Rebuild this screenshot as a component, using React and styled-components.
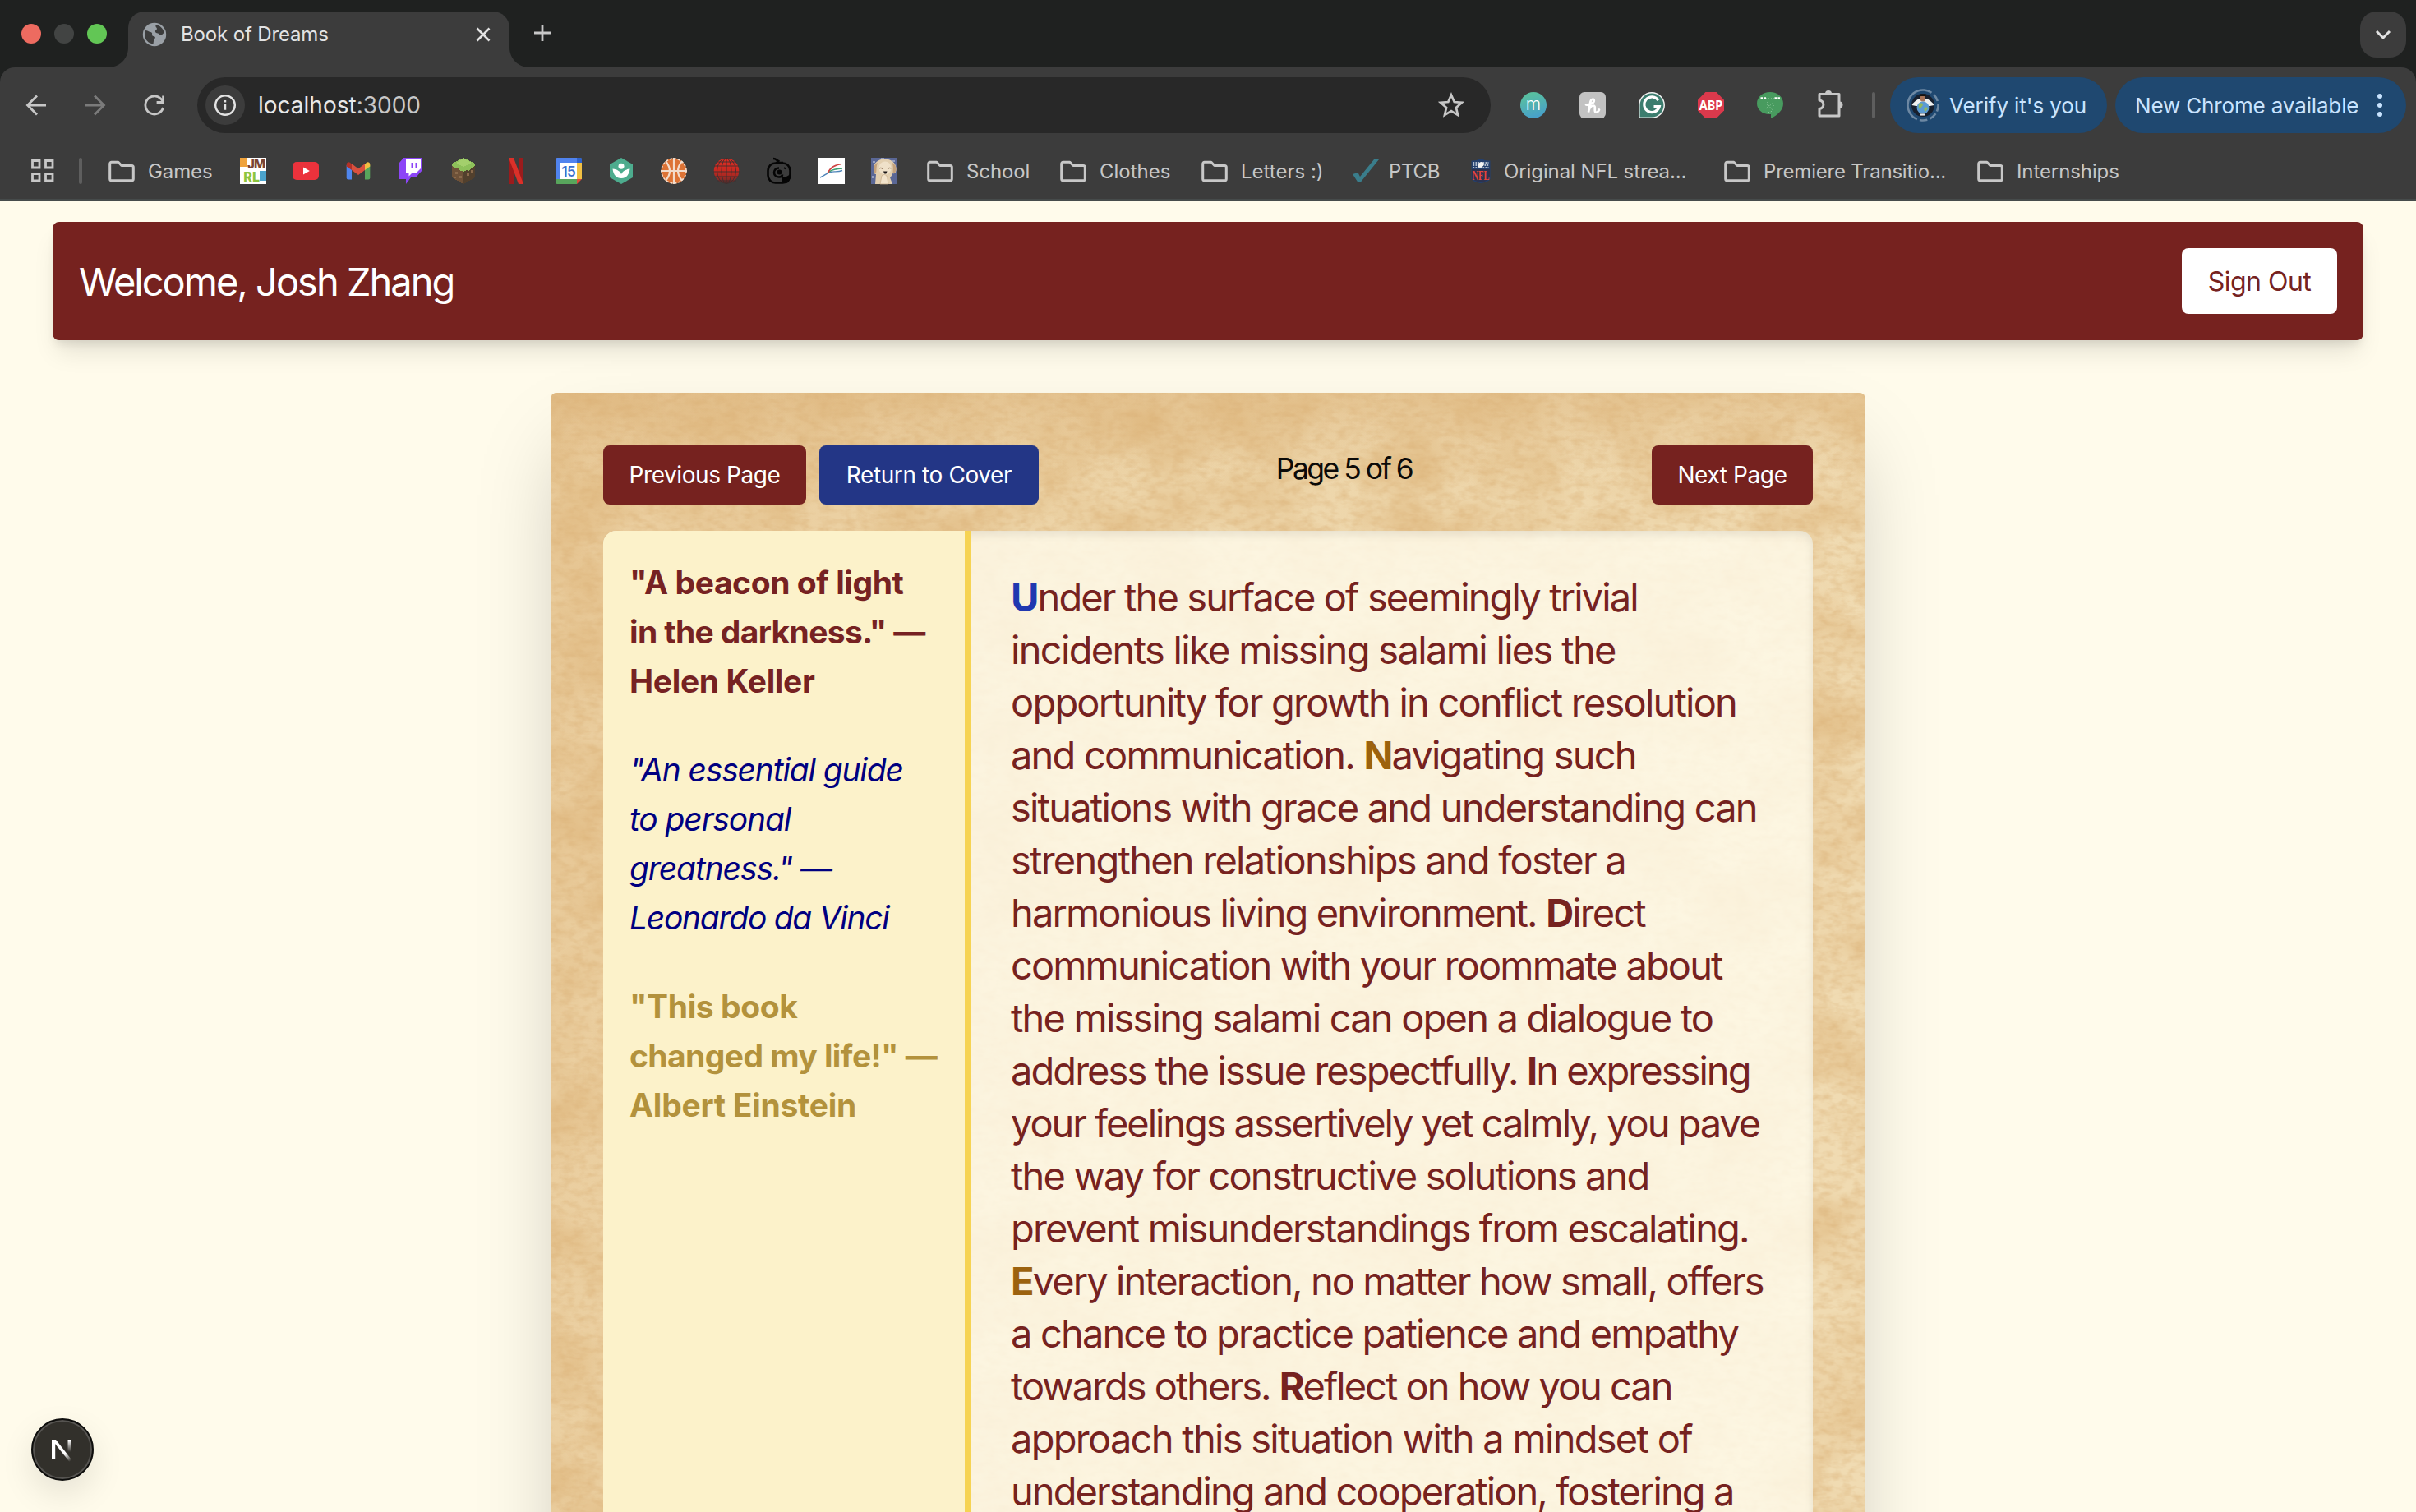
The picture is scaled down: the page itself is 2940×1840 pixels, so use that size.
import React from "react";
import styled, { createGlobalStyle } from "styled-components";

const GlobalStyle = createGlobalStyle`
  *, *::before, *::after { box-sizing: border-box; }
  html, body { margin: 0; padding: 0; overflow: hidden; }
  body { background: #fffbeb; font-family: Inter, "Liberation Sans", sans-serif; -webkit-font-smoothing: antialiased; }
  svg { display: block; flex: none; overflow: visible; }
  p { margin: 0; }
`;

/* ---------- window ---------- */
const Window = styled.div`
  width: 2940px;
  height: 1840px;
  display: flex;
  flex-direction: column;
  overflow: hidden;
  position: relative;
`;

const Text = styled.span`
  display: block;
  flex: none;
  white-space: nowrap;
  width: ${(p) => (p.$w ? `${p.$w}px` : "auto")};
  margin-left: ${(p) => p.$ml || 0}px;
  font-size: ${(p) => p.$size || 24}px;
  font-weight: ${(p) => p.$weight || 400};
  letter-spacing: ${(p) => p.$ls || 0}px;
  color: ${(p) => p.$color || "inherit"};
`;

/* ---------- tab strip ---------- */
const TabStrip = styled.div`
  height: 82px;
  flex: none;
  background: #1f2120;
  display: flex;
  align-items: flex-start;
  padding: 14px 12px 0 26px;
`;
const Lights = styled.div`
  display: flex;
  gap: 16px;
  padding-top: 15px;
  width: 130px;
`;
const Light = styled.i`
  width: 24px;
  height: 24px;
  border-radius: 50%;
  background: ${(p) => p.$color};
`;
const Tab = styled.div`
  width: 464px;
  height: 68px;
  border-radius: 20px 20px 0 0;
  background: #3c3c3c;
  color: #e3e3e3;
  display: flex;
  align-items: center;
  padding: 0 23px 13px 17px;
  position: relative;
  &::before, &::after {
    content: "";
    position: absolute;
    bottom: 0;
    width: 24px;
    height: 24px;
  }
  &::before {
    left: -24px;
    background: radial-gradient(circle at 0 0, transparent 23.5px, #3c3c3c 24.5px);
  }
  &::after {
    right: -24px;
    background: radial-gradient(circle at 100% 0, transparent 23.5px, #3c3c3c 24.5px);
  }
`;
const TabTitle = styled(Text)`
  margin-left: 17px;
  flex: 1;
`;
const NewTab = styled.div`
  margin-left: 29px;
  padding-top: 15px;
`;
const TabSearch = styled.div`
  margin-left: auto;
  width: 56px;
  height: 56px;
  border-radius: 20px;
  background: #3c3c3c;
  display: grid;
  place-items: center;
`;

/* ---------- toolbar ---------- */
const ToolbarBack = styled.div`
  background: #1f2120;
  flex: none;
`;
const Chrome = styled.div`
  height: 162px;
  background: #3c3c3c;
  border-radius: 18px 18px 0 0;
  border-bottom: 2px solid #464b4b;
  display: flex;
  flex-direction: column;
`;
const Toolbar = styled.div`
  height: 92px;
  padding: 12px 12px 12px 28px;
  display: flex;
  align-items: center;
`;
const NavIcons = styled.div`
  width: 212px;
  display: flex;
  gap: 40px;
`;
const AddressBar = styled.div`
  width: 1574px;
  height: 68px;
  border-radius: 34px;
  background: #282828;
  display: flex;
  align-items: center;
  padding: 0 31px 0 10px;
`;
const InfoChip = styled.div`
  width: 48px;
  height: 48px;
  border-radius: 50%;
  background: #3c3c3c;
  display: grid;
  place-items: center;
  margin-right: 16px;
`;
const Port = styled.span`
  color: #c7c7c7;
`;
const Url = styled(Text)`
  flex: 1;
  color: #e8e8e8;
`;
const Extensions = styled.div`
  display: flex;
  gap: 40px;
  margin-left: 36px;
`;
const Divider = styled.i`
  width: 4px;
  height: 32px;
  margin-left: ${(p) => p.$ml}px;
  border-radius: 2px;
  background: #5e5e5e;
  flex: none;
`;
const Pill = styled.div`
  height: 68px;
  width: ${(p) => p.$w}px;
  border-radius: 34px;
  background: #1f4870;
  color: #c9e4ff;
  display: flex;
  align-items: center;
  margin-left: ${(p) => p.$gap}px;
  padding: 0 20px;
`;

/* ---------- bookmarks ---------- */
const Bookmarks = styled.div`
  height: 68px;
  padding: 0 0 0 36px;
  display: flex;
  align-items: center;
  color: #c7c7c7;
`;
const Bookmark = styled.div`
  display: flex;
  align-items: center;
  gap: ${(p) => p.$gap || 16}px;
  margin-left: ${(p) => p.$ml || 0}px;
`;
const Favicons = styled.div`
  display: flex;
  gap: 32px;
  margin-left: 32px;
`;

/* ---------- page ---------- */
const Page = styled.main`
  flex: 1;
  min-height: 0;
  padding: 26px 64px 0;
  display: flex;
  flex-direction: column;
  align-items: center;
`;
const Banner = styled.header`
  width: 100%;
  height: 144px;
  flex: none;
  padding: 32px;
  border-radius: 8px;
  background: #76221f;
  color: #fff;
  display: flex;
  align-items: center;
  justify-content: space-between;
  box-shadow: 0 20px 30px -6px rgba(0, 0, 0, 0.1), 0 8px 12px -4px rgba(0, 0, 0, 0.1);
`;
const Button = styled.button`
  appearance: none;
  border: 0;
  font-family: inherit;
  width: ${(p) => p.$w}px;
  height: ${(p) => p.$h || 72}px;
  border-radius: 8px;
  background: ${(p) => p.$bg || "#76221f"};
  color: ${(p) => p.$fg || "#fff"};
  padding: 0;
  display: flex;
  align-items: center;
  justify-content: center;
`;
const Book = styled.article`
  width: 1600px;
  height: 1600px;
  flex: none;
  margin-top: 64px;
  padding: 64px;
  border-radius: 8px;
  position: relative;
  isolation: isolate;
  background: #e8cb9b;
  box-shadow: 0 50px 100px -24px rgba(0, 0, 0, 0.25);
`;
const Parchment = styled.svg`
  position: absolute;
  inset: 0;
  width: 100%;
  height: 100%;
  border-radius: 8px;
  overflow: hidden;
  z-index: -1;
`;
const BookNav = styled.nav`
  display: flex;
  justify-content: space-between;
  align-items: flex-start;
  height: 72px;
  margin-bottom: 32px;
`;
const ButtonGroup = styled.div`
  display: flex;
  gap: 16px;
`;
const PageCount = styled(Text)`
  line-height: 57px;
  padding-right: 3px;
  color: #0c0a08;
`;
const Spread = styled.div`
  height: 1400px;
  display: flex;
  border-radius: 16px;
  overflow: hidden;
  background: rgba(255, 251, 236, 0.82);
  box-shadow: inset 0 4px 12px rgba(0, 0, 0, 0.09);
`;
const Sidebar = styled.aside`
  width: 448px;
  flex: none;
  padding: 33px 0 0 32px;
  background: #fcf2ca;
  border-right: 8px solid #f6d353;
  display: flex;
  flex-direction: column;
  gap: 48px;
`;
const Quote = styled.p`
  font-size: 39px;
  line-height: 60px;
  font-weight: ${(p) => p.$weight};
  font-style: ${(p) => (p.$italic ? "italic" : "normal")};
  color: ${(p) => p.$color};
`;
const Passage = styled.p`
  padding: 49px 0 0 48px;
  font-size: 47px;
  line-height: 64px;
  font-weight: 425;
  color: #76221f;
`;
const Line = styled.span`
  display: block;
  white-space: nowrap;
  letter-spacing: ${(p) => p.$ls || 0}px;
`;
const Initial = styled.b`
  font-weight: 700;
  color: ${(p) => p.$color || "inherit"};
`;
const DevBadge = styled.div`
  position: absolute;
  left: 38px;
  top: 1726px;
  width: 76px;
  height: 76px;
  border-radius: 50%;
  background: #32302b;
  border: 2px solid #0e0e0d;
  box-shadow: inset 0 0 0 2px #565451, 0 16px 40px rgba(0, 0, 0, 0.1);
  display: grid;
  place-items: center;
`;

/* ---------- icons ---------- */
const Stroke = ({ size = 32, w = 2.8, color = "#c7c7c7", children, ...rest }) => (
  <svg width={size} height={size} viewBox="0 0 32 32" fill="none" stroke={color} strokeWidth={w} {...rest}>
    {children}
  </svg>
);
const Globe = () => (
  <svg width="30" height="30" viewBox="0 0 30 30">
    <circle cx="15" cy="15" r="14.2" fill="#9aa0a6" />
    <path d="M3 15c0-2 .4-3.500 1.200-5 2 .2 3.800 1.500 5.500 1.700 2 .3 2.800 1.600 2.300 3.300-.3 1.300 1 2.200 2.600 2.300 1.800.2 1.600 2.300.4 3.200-1 .9-1 2.300-1.500 6C7.500 26 3 21 3 15z" fill="#3c3c3c" />
    <path d="M16.500 3.200c5 .5 9 4.400 10.200 9.300-1.500 2-2.700 3.200-4.500 3.200-1.600 0-1.500-1.900-3-2.200-2-.3-3.500-.8-3.300-2.700.2-1.400 2-1.300 2.100-2.800 0-1.700-2.200-1.700-1.500-4.800z" fill="#3c3c3c" />
  </svg>
);
const Folder = () => (
  <Stroke w="3">
    <path d="M1.700 7.200a2 2 0 0 1 2-2h8.200l4 4.300h12.400a2 2 0 0 1 2 2v14.300a2 2 0 0 1-2 2H3.700a2 2 0 0 1-2-2z" strokeLinejoin="round" />
  </Stroke>
);
const Fav = ({ children, ...rest }) => (
  <svg width="32" height="32" viewBox="0 0 32 32" {...rest}>
    {children}
  </svg>
);
const fontFam = 'Inter, "Liberation Sans", sans-serif';
const T = ({ s, w = 400, c = "#fff", children, f, ...rest }) => (
  <text fontFamily={f || fontFam} fontSize={s} fontWeight={w} fill={c} textAnchor="middle" {...rest}>
    {children}
  </text>
);

const BookmarkIcons = () => (
  <Favicons>
    <Fav>
      <rect width="32" height="32" fill="#fff" />
      <rect width="8" height="11" fill="#f0a33c" />
      <rect x="24" y="16" width="8" height="12" fill="#4ba3cc" />
      <T s="15" w="800" c="#7a4430" x="13.500" y="13">J</T>
      <T s="15" w="800" c="#7a4430" x="24" y="13">M</T>
      <T s="16" w="800" c="#8cc540" x="9.500" y="29">R</T>
      <T s="16" w="800" c="#8cc540" x="19.500" y="29">L</T>
    </Fav>
    <Fav>
      <rect y="5" width="32" height="22" rx="5" fill="#eb323c" />
      <path d="M13 11.500v9l7.800-4.500z" fill="#fff" />
    </Fav>
    <Fav>
      <path d="M1.700 9v15.500a2 2 0 0 0 2 2H8V14z" fill="#4f86ee" />
      <path d="M30.300 9v15.500a2 2 0 0 1-2 2H24V14z" fill="#58a55c" />
      <path d="M24 8v7l6.300-4.500V8c0-2.500-2.500-3.600-4.300-2.300z" fill="#f1bf42" />
      <path d="M8 8v7l-6.300-4.500V8c0-2.500 2.500-3.600 4.300-2.300z" fill="#b33127" />
      <path d="M8 7.200l8 6 8-6V15l-8 6-8-6z" fill="#d9503f" />
    </Fav>
    <Fav>
      <path d="M7 0h23v15l-8 9h-6l-6 8v-6H2V6z" fill="#8c45f7" />
      <path d="M10 2h18v11l-6 6h-5l-3.500 3.500V19H10z" fill="#fff" />
      <path d="M16.500 6h2.500v7h-2.500zM21.500 6H24v7h-2.500z" fill="#8c45f7" />
    </Fav>
    <Fav shapeRendering="crispEdges">
      <path d="M2 7l14 7v18L2 24z" fill="#6e5138" />
      <path d="M30 7L16 14v18l14-8z" fill="#52402d" />
      <path d="M16 0L30 7v3l-4 2-3 4-3-1-4 2-5-2-2-2-4 0-3-4V7z" fill="#8dc05a" />
      <path d="M16 1l10 5-10 5L7 6z" fill="#a3cf6c" />
      <path d="M6 17h3v3H6zM11 22h3v3h-3zM20 19h3v3h-3zM25 15h3v3h-3zM5 23h2v2H5z" fill="#8a6a4c" />
    </Fav>
    <Fav>
      <path d="M7 0h6v32H7zM19 0h6v32h-6z" fill="#9b1b1c" />
      <path d="M7 0h6l12 32h-6z" fill="#db3029" />
    </Fav>
    <Fav>
      <path d="M2 0h28a2 2 0 0 1 2 2v5H0V2a2 2 0 0 1 2-2z" fill="#5083ee" />
      <path d="M0 6h7v20H0z" fill="#5083ee" />
      <path d="M26 0h4a2 2 0 0 1 2 2v4h-6z" fill="#2f62c9" />
      <path d="M26 6h6v20h-6z" fill="#f2c143" />
      <path d="M0 26h26v6H2a2 2 0 0 1-2-2z" fill="#58a55c" />
      <path d="M26 26h6l-6 6z" fill="#e0483c" />
      <rect x="6" y="6" width="20" height="20" fill="#fff" />
      <T s="17" w="600" c="#3b6fce" x="15.800" y="22.500" letterSpacing="-0.6">15</T>
    </Fav>
    <Fav>
      <path d="M16 0l14 8v16l-14 8-14-8V8z" fill="#4dac8e" />
      <circle cx="16" cy="10.300" r="3.500" fill="#fff" />
      <path d="M16 25c-6 0-9.500-4-10.500-11.500C11 14 14.500 16.500 16 20c1.500-3.500 5-6 10.500-6.500C25.500 21 22 25 16 25z" fill="#fff" />
    </Fav>
    <Fav>
      <circle cx="16" cy="16" r="15.500" fill="#dd7335" />
      <g stroke="#f3dccb" strokeWidth="2.200" fill="none">
        <circle cx="16" cy="16" r="15" strokeWidth="1.600" strokeDasharray="3 2" />
        <path d="M16 0v32M0 16h32M6 4c4 5 5 8 5 12s-1 7-5 12M26 4c-4 5-5 8-5 12s1 7 5 12" />
      </g>
    </Fav>
    <Fav>
      <defs>
        <linearGradient id="redGlobe" x1="0" y1="0" x2="0" y2="1">
          <stop offset="0" stopColor="#e02e24" />
          <stop offset="0.55" stopColor="#c42820" />
          <stop offset="1" stopColor="#6b2a28" />
        </linearGradient>
      </defs>
      <circle cx="16" cy="16" r="15.300" fill="url(#redGlobe)" />
      <g stroke="#3c3030" strokeWidth="0.900" fill="none">
        <path d="M16 0v32M1 10h30M0 17h32M1 23h30M4 5h24M4 28h24" />
        <ellipse cx="16" cy="16" rx="6" ry="15.500" />
        <ellipse cx="16" cy="16" rx="11.500" ry="15.500" />
      </g>
    </Fav>
    <Fav>
      <rect x="2.500" y="6.500" width="27" height="24" rx="9" stroke="#050505" strokeWidth="2.600" fill="none" />
      <path d="M9 1c4 0 4 2.500 7.500 3.500M12 6h9" stroke="#050505" strokeWidth="2.600" fill="none" />
      <path d="M16 12.500c-4 0-6 2.500-6 5.500s2.500 5.500 6 5.500c3 0 4-1.500 4-3" stroke="#050505" strokeWidth="2.600" fill="none" />
      <circle cx="16.500" cy="17.500" r="3" fill="#050505" />
      <path d="M30 19c-3 4-7 5-11 5v7h6c4-1 5-6 5-12z" fill="#050505" />
      <path d="M22 12l2 1.500" stroke="#050505" strokeWidth="2" />
    </Fav>
    <Fav>
      <rect width="32" height="32" fill="#fff" />
      <g fill="none" strokeWidth="1.400">
        <path d="M2 24c5-2 8-5 12-6.500 5-1.500 9 .5 15-2" stroke="#4d84b8" />
        <path d="M12 18c4-4 10-4.500 17-5" stroke="#3fa074" />
        <path d="M11 19c4-8 9-10 17-11.500" stroke="#cf4545" strokeWidth="1.700" />
      </g>
    </Fav>
    <Fav>
      <rect width="32" height="32" fill="#5a6796" />
      <path d="M2 4h3v2H2zM26 3h3v2h-3zM28 12h2v3h-2zM1 22h2v3H1zM12 0h4v2h-4z" fill="#97a0bf" />
      <path d="M3 15C2 6 9 1.500 16.500 1.500S31 6 30.500 14c0 5-3 6-4.500 5-.5 3-2 4-3 5l3 8H5l1-12c-2 0-3-2-3-5z" fill="#e2cfb0" />
      <path d="M3 14c0-4 2-7 5-8-2 5-1 8-2 13-2 0-3-2-3-5zM30.500 14c0-4-2-7-5-8 2 5 1 9 1 13 2 0 4-2 4-5z" fill="#c4a27c" />
      <ellipse cx="17" cy="12.500" rx="7.500" ry="8" fill="#efe1c9" />
      <path d="M10 13q2-1.500 4 .5M20.500 13.500q2-2 4-.5" stroke="#8b6f55" strokeWidth="1.100" fill="none" />
      <path d="M15 16.500h4.500l-1.200 3h-2z" fill="#1d1818" />
      <path d="M13 22c3-3 7-1 7 4l1 6H11z" fill="#f2e3cb" stroke="#c5aa85" strokeWidth="0.700" />
    </Fav>
  </Favicons>
);

const Puzzle = styled.svg`
  margin: -3px -4px 0 0;
`;

const ExtensionIcons = () => (
  <Extensions>
    <Fav>
      <defs>
        <linearGradient id="mg" x1="0.300" y1="0" x2="0.600" y2="1">
          <stop offset="0.100" stopColor="#58bfa0" />
          <stop offset="1" stopColor="#479fcc" />
        </linearGradient>
      </defs>
      <circle cx="16" cy="16" r="16" fill="url(#mg)" />
      <T s="21" w="300" x="16" y="22">m</T>
    </Fav>
    <Fav>
      <rect width="32" height="32" rx="6" fill="#c2c2c2" />
      <path d="M8 15.500c4 .5 9.500-2 9.800-5 .2-2.600-3.600-2.500-4.400 1.300L11 24.500c1-5 3.500-8 6-8 3.500 0 .4 6.500 2.500 8 1.500.8 3.500-.5 4.500-3" stroke="#fff" strokeWidth="2.700" fill="none" strokeLinecap="round" />
    </Fav>
    <Fav>
      <path d="M.8 31.200V16A15.200 15.200 0 1 1 16 31.200z" fill="#3b7d6e" stroke="#f2f2f2" strokeWidth="1.500" />
      <path d="M24 10A9.400 9.400 0 1 0 25.300 17.500H18.500" stroke="#fff" strokeWidth="3.200" fill="none" />
    </Fav>
    <Fav>
      <path d="M9.400 0h13.200L32 9.400v13.200L22.600 32H9.400L0 22.600V9.400z" fill="#db394c" />
      <T s="16" w="700" f='"Noto Sans", sans-serif' x="16" y="22" textLength="28.500" lengthAdjust="spacingAndGlyphs">ABP</T>
    </Fav>
    <Fav>
      <path d="M16 0c9 0 16 6 16 14 0 8-7 14-15 18v-5C8 28 0 22 0 14 0 6 7 0 16 0z" fill="#489b5f" />
      <path d="M4.500 7.500h2.500M8.500 7.500h2.500M21.500 7.500H24M25.500 7.500H28" stroke="#fff" strokeWidth="2.400" />
      <path d="M11 8h11M12 14l8 9M11 20l9-7M14 25l5-2M13 12v8M20 16v3" stroke="#b8e0c2" strokeWidth="0.800" strokeDasharray="1 2" />
    </Fav>
    <Puzzle width="36" height="36" viewBox="0 0 36 36">
      <path d="M4 5.500h24v26.500H4v-8.500c6.500-1 6.500-9.500 0-10.500z" fill="none" stroke="#c7c7c7" strokeWidth="3" strokeLinejoin="round" />
      <path d="M11 5a4 4 0 0 1 8 0zM28.500 14.500a4 4 0 0 1 0 8z" fill="#c7c7c7" />
    </Puzzle>
  </Extensions>
);

const Avatar = () => (
  <svg width="40" height="40" viewBox="0 0 40 40">
    <circle cx="20" cy="20" r="18.500" fill="none" stroke="#6d88a3" strokeWidth="2.600" strokeDasharray="9.500 3.200 9.500 3.200 9.500 3.200 9.500 3.200 9.500 3.200 53" transform="rotate(-85 20 20)" />
    <circle cx="20" cy="20" r="14" fill="#18202e" />
    <path d="M6.500 20c2-4 6-7 10-8h7c4 1 8 4 10 8l-5 1H11.500z" fill="#f0f1ef" />
    <rect x="17" y="7.500" width="6" height="8" rx="2" fill="#a87458" />
    <path d="M16.500 6.500h7V9h-7z" fill="#17130f" />
    <circle cx="20" cy="23" r="7.500" fill="#5b9bd3" />
    <path d="M15 19c2-2 5-2 5 0s-2 3-3 5-3-1-2-5zM22 23c2-1 4 0 4 1l-3 4c-2-1-2-4-1-5z" fill="#8fb860" />
    <path d="M17 31.500h5" stroke="#e9e9e9" strokeWidth="2.200" />
  </svg>
);

const NflShield = () => (
  <Fav>
    <path d="M4.500 3.500Q10 4 16 1q6 3 11.500 2.500V26q-3 3.500-11.500 5-8.500-1.500-11.500-5z" fill="#24406e" />
    <path d="M6.500 6h19M6.500 9h5M20.500 9h5M6.500 12h19" stroke="#dfe6ee" strokeWidth="1.700" strokeDasharray="1.700 1.300" />
    <ellipse cx="16" cy="8.500" rx="4" ry="3" fill="#f3f3f3" transform="rotate(-35 16 8.500)" />
    <path d="M5 14h22v11q-4 4-11 5-7-1-11-5z" fill="#2c3350" />
    <T s="17" w="700" c="#e8433a" f='"Liberation Serif", serif' x="16" y="26.500" textLength="21" lengthAdjust="spacingAndGlyphs">NFL</T>
  </Fav>
);

/* ---------- content ---------- */
const BLUE = "#2038b0";
const GOLD = "#9c620e";

const passage = [
  { ls: -1.88, parts: [["U", BLUE], "nder the surface of seemingly trivial"] },
  { ls: -1.67, parts: ["incidents like missing salami lies the"] },
  { ls: -1.79, parts: ["opportunity for growth in conflict resolution"] },
  { ls: -1.8, parts: ["and communication. ", ["N", GOLD], "avigating such"] },
  { ls: -1.79, parts: ["situations with grace and understanding can"] },
  { ls: -1.76, parts: ["strengthen relationships and foster a"] },
  { ls: -1.87, parts: ["harmonious living environment. ", ["D"], "irect"] },
  { ls: -1.87, parts: ["communication with your roommate about"] },
  { ls: -1.8, parts: ["the missing salami can open a dialogue to"] },
  { ls: -1.94, parts: ["address the issue respectfully. ", ["I"], "n expressing"] },
  { ls: -2.07, parts: ["your feelings assertively yet calmly, you pave"] },
  { ls: -1.85, parts: ["the way for constructive solutions and"] },
  { ls: -1.84, parts: ["prevent misunderstandings from escalating."] },
  { ls: -1.92, parts: [["E", GOLD], "very interaction, no matter how small, offers"] },
  { ls: -1.84, parts: ["a chance to practice patience and empathy"] },
  { ls: -2.01, parts: ["towards others. ", ["R"], "eflect on how you can"] },
  { ls: -1.72, parts: ["approach this situation with a mindset of"] },
  { ls: -1.93, parts: ["understanding and cooperation, fostering a"] },
];

const quotes = [
  { weight: 700, color: "#762222", lines: [['"A beacon of light', -0.42], ['in the darkness." —', -0.64], ["Helen Keller", -0.35]] },
  { weight: 400, italic: true, color: "#000080", lines: [['"An essential guide', -1.15], ["to personal", -1.1], ['greatness." —', -1.1], ["Leonardo da Vinci", -1.28]] },
  { weight: 700, color: "#b3923c", lines: [['"This book', -0.4], ['changed my life!" —', -0.6], ["Albert Einstein", -0.27]] },
];

export default function App() {
  return (
    <>
      <GlobalStyle />
      <Window>
        <TabStrip>
          <Lights>
            <Light $color="#ed6b60" />
            <Light $color="#424443" />
            <Light $color="#62c655" />
          </Lights>
          <Tab>
            <Globe />
            <TabTitle $size={24} $ls={-0.15}>Book of Dreams</TabTitle>
            <svg width="18" height="18" viewBox="0 0 18 18" stroke="#e3e3e3" strokeWidth="2.600">
              <path d="M1.500 1.500l15 15M16.500 1.500l-15 15" />
            </svg>
          </Tab>
          <NewTab>
            <svg width="22" height="22" viewBox="0 0 22 22" stroke="#c7c7c7" strokeWidth="2.800">
              <path d="M11 1v20M1 11h20" />
            </svg>
          </NewTab>
          <TabSearch>
            <svg width="20" height="12" viewBox="0 0 20 12" fill="none" stroke="#e3e3e3" strokeWidth="3">
              <path d="M2 2l8 8 8-8" />
            </svg>
          </TabSearch>
        </TabStrip>

        <ToolbarBack>
          <Chrome>
            <Toolbar>
              <NavIcons>
                <Stroke><path d="M28 16H6M17 4.500L5.500 16 17 27.500" /></Stroke>
                <Stroke color="#7b7b7b"><path d="M4 16h22M15 4.500L26.500 16 15 27.500" /></Stroke>
                <Stroke>
                  <path d="M26.500 19A11 11 0 1 1 24 8.500l2 2.500" />
                  <path d="M26.600 4.500v8h-8" />
                </Stroke>
              </NavIcons>
              <AddressBar>
                <InfoChip>
                  <Stroke size="28" w="2.800" color="#e3e3e3">
                    <circle cx="16" cy="16" r="13.500" />
                    <path d="M16 14.500v8M16 9v3" />
                  </Stroke>
                </InfoChip>
                <Url $size={28}>localhost<Port>:3000</Port></Url>
                <svg width="34" height="34" viewBox="0 0 34 34" fill="none" stroke="#c7c7c7" strokeWidth="2.700">
                  <path d="M17 4.500l3.700 8.500 9.200.8-7 6.100 2.100 9-8-4.800-8 4.800 2.100-9-7-6.100 9.200-.8z" />
                </svg>
              </AddressBar>
              <ExtensionIcons />
              <Divider $ml={36} />
              <Pill $w={264} $gap={18}>
                <Avatar />
                <Text $size={26} $ml={12} $ls={-0.1}>Verify it's you</Text>
              </Pill>
              <Pill $w={354} $gap={10}>
                <Text $size={26} $w={294} $ml={4} $ls={-0.15}>New Chrome available</Text>
                <svg width="8" height="30" viewBox="0 0 8 30" fill="#c9e4ff">
                  <circle cx="4" cy="4" r="3" />
                  <circle cx="4" cy="15" r="3" />
                  <circle cx="4" cy="26" r="3" />
                </svg>
              </Pill>
            </Toolbar>

            <Bookmarks>
              <Stroke>
                <path d="M3.500 3.500h8.500v8.500H3.500zM19.500 3.500H28v8.500h-8.500zM3.500 19.500h8.500V28H3.500zM19.500 19.500H28V28h-8.500z" />
              </Stroke>
              <Divider $ml={28} />
              <Bookmark $ml={32}>
                <Folder />
                <Text $w={80} $ls={-0.1}>Games</Text>
              </Bookmark>
              <BookmarkIcons />
              <Bookmark $ml={36}><Folder /><Text $w={78} $ls={-0.1}>School</Text></Bookmark>
              <Bookmark $ml={36}><Folder /><Text $w={88}>Clothes</Text></Bookmark>
              <Bookmark $ml={36}><Folder /><Text $w={104}>Letters :)</Text></Bookmark>
              <Bookmark $ml={32} $gap={12}>
                <Fav>
                  <path d="M0 20l6.500-2 2.500 5L26 2h6L9.500 30h-3z" fill="#3a7d8b" />
                </Fav>
                <Text $w={64} $ls={-0.3}>PTCB</Text>
              </Bookmark>
              <Bookmark $ml={32} $gap={12}>
                <NflShield />
                <Text $w={222} $ls={-0.1}>Original NFL strea...</Text>
              </Bookmark>
              <Bookmark $ml={46}><Folder /><Text $w={222} $ls={-0.2}>Premiere Transitio...</Text></Bookmark>
              <Bookmark $ml={38}><Folder /><Text $ls={-0.1}>Internships</Text></Bookmark>
            </Bookmarks>
          </Chrome>
        </ToolbarBack>

        <Page>
          <Banner>
            <Text $size={47} $ls={-2} $weight={425}>Welcome, Josh Zhang</Text>
            <Button $w={189} $h={80} $bg="#fff" $fg="#76221f">
              <Text $size={32} $ls={-0.5}>Sign Out</Text>
            </Button>
          </Banner>

          <Book>
            <Parchment preserveAspectRatio="none">
              <defs>
                <linearGradient id="base" x1="0" y1="0" x2="1" y2="0.250">
                  <stop offset="0" stopColor="#e9cb9b" />
                  <stop offset="0.450" stopColor="#edd5a9" />
                  <stop offset="1" stopColor="#f0dbb2" />
                </linearGradient>
                <linearGradient id="shade" x1="0" y1="0" x2="0" y2="1">
                  <stop offset="0" stopColor="#d9ae74" stopOpacity="0.400" />
                  <stop offset="0.070" stopColor="#d9ae74" stopOpacity="0" />
                </linearGradient>
                <filter id="blotches" x="0" y="0" width="100%" height="100%" colorInterpolationFilters="sRGB">
                  <feTurbulence type="fractalNoise" baseFrequency="0.010 0.014" numOctaves="5" seed="7" />
                  <feColorMatrix values="0 0 0 0 0.860  0 0 0 0 0.690  0 0 0 0 0.450  1.150 0 0 0 -0.400" />
                </filter>
                <filter id="fibres" x="0" y="0" width="100%" height="100%" colorInterpolationFilters="sRGB">
                  <feTurbulence type="fractalNoise" baseFrequency="0.070 0.130" numOctaves="3" seed="3" />
                  <feColorMatrix values="0 0 0 0 0.850  0 0 0 0 0.680  0 0 0 0 0.450  0.900 0 0 0 -0.350" />
                </filter>
              </defs>
              <rect width="100%" height="100%" fill="url(#base)" />
              <rect width="100%" height="100%" fill="url(#shade)" />
              <rect width="100%" height="100%" filter="url(#blotches)" />
              <rect width="100%" height="100%" filter="url(#fibres)" />
            </Parchment>
            <BookNav>
              <ButtonGroup>
                <Button $w={247}><Text $size={28} $ls={-0.43}>Previous Page</Text></Button>
                <Button $w={267} $bg="#233686"><Text $size={28} $ls={-0.4}>Return to Cover</Text></Button>
              </ButtonGroup>
              <PageCount $size={35.5} $ls={-2.5}>Page 5 of 6</PageCount>
              <Button $w={196}><Text $size={28} $ls={-0.4}>Next Page</Text></Button>
            </BookNav>
            <Spread>
              <Sidebar>
                {quotes.map((q) => (
                  <Quote key={q.color} $weight={q.weight} $italic={q.italic} $color={q.color}>
                    {q.lines.map(([text, ls]) => (
                      <Line key={text} $ls={ls}>{text}</Line>
                    ))}
                  </Quote>
                ))}
              </Sidebar>
              <Passage>
                {passage.map((line, i) => (
                  <Line key={i} $ls={line.ls}>
                    {line.parts.map((part, j) =>
                      Array.isArray(part) ? (
                        <Initial key={j} $color={part[1]}>{part[0]}</Initial>
                      ) : (
                        part
                      )
                    )}
                  </Line>
                ))}
              </Passage>
            </Spread>
          </Book>
        </Page>

        <DevBadge>
          <svg width="28" height="30" viewBox="0 0 28 30">
            <defs>
              <linearGradient id="slant" x1="4" y1="4" x2="25" y2="28" gradientUnits="userSpaceOnUse">
                <stop offset="0.650" stopColor="#fff" />
                <stop offset="1" stopColor="#fff" stopOpacity="0" />
              </linearGradient>
              <linearGradient id="stem" x1="0" y1="2" x2="0" y2="18" gradientUnits="userSpaceOnUse">
                <stop offset="0.100" stopColor="#fff" />
                <stop offset="1" stopColor="#fff" stopOpacity="0" />
              </linearGradient>
            </defs>
            <rect x="1" y="3" width="4.200" height="23" fill="#fff" />
            <path d="M1 3h5l20 25.500-3 2z" fill="url(#slant)" />
            <rect x="20.500" y="3" width="4" height="16" fill="url(#stem)" />
          </svg>
        </DevBadge>
      </Window>
    </>
  );
}
